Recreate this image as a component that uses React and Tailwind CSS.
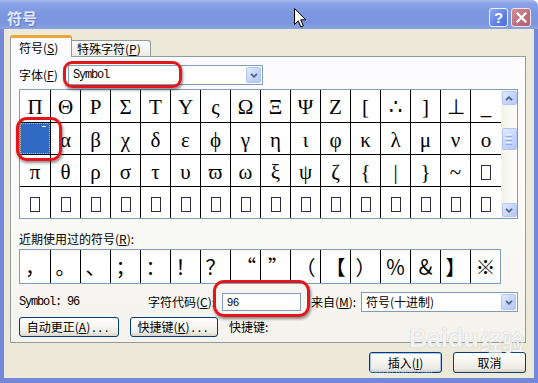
import React from 'react';

const R1 = ['Π','Θ','Ρ','Σ','Τ','Υ','ς','Ω','Ξ','Ψ','Ζ','[','∴',']','⊥','_'];
const R2 = ['SEL','α','β','χ','δ','ε','ϕ','γ','η','ι','φ','κ','λ','μ','ν','ο'];
const R3 = ['π','θ','ρ','σ','τ','υ','ϖ','ω','ξ','ψ','ζ','{','|','}','~','BOX'];
const R4 = Array(16).fill('BOX');
const ROWS = [R1, R2, R3, R4];
const RECENT = ['，','。','、','；','：','！','？','“','”','（','【','）','％','＆','】','※'];

function Chevron({ up }) {
  return (
    <svg width="8" height="5" viewBox="0 0 8 5">
      <path d={up ? 'M1 4.2L4 1.2L7 4.2' : 'M1 0.8L4 3.8L7 0.8'} fill="none" stroke="#4d6185" strokeWidth="1.7" />
    </svg>
  );
}

function BlueBtn({ className, children }) {
  return (
    <div className={'flex items-center justify-center rounded-[2px] border border-[#b2c6f4] bg-[linear-gradient(135deg,#e2eafe_0%,#c6d6fc_50%,#b4c9f8_100%)] ' + className}>
      {children}
    </div>
  );
}

function Combo({ className, children, textClass }) {
  return (
    <div className={'h-[20px] flex border border-[#7f9db9] bg-white ' + className}>
      <div className={'flex-1 flex items-center pl-[4px] ' + textClass}>{children}</div>
      <BlueBtn className="w-[15px] m-[1px]">
        <Chevron />
      </BlueBtn>
    </div>
  );
}

function XPButton({ className, children, isDefault }) {
  return (
    <div
      className={
        'h-full flex items-center justify-center rounded-[3px] border border-[#003c74] bg-[linear-gradient(to_bottom,#ffffff_0%,#f6f5f0_45%,#ecebe5_80%,#d8d2c6_100%)] ' +
        (isDefault ? 'shadow-[inset_0_0_0_1px_#a9c2f0] ' : '') +
        className
      }
    >
      {children}
    </div>
  );
}

function SymCell({ ch, ri, ci }) {
  const edge = (ci < 15 ? 'border-r ' : '') + (ri > 0 ? 'border-t ' : '');
  if (ch === 'SEL') {
    return (
      <div className={edge + 'border-black bg-[#316ac5]'}>
        <div className="w-full h-full border border-dotted border-[#e7c46c] flex justify-end pt-[2px] pr-[3px]">
          <div className="w-[4px] h-[1px] bg-white" />
        </div>
      </div>
    );
  }
  return (
    <div className={edge + 'border-black flex justify-center pt-[7px]'}>
      {ch === 'BOX' ? (
        <div className="mt-[3px] w-[10px] h-[15px] border border-[#2c2c4c]" />
      ) : (
        <span className="text-[21px] leading-[21px] font-['Liberation_Serif',serif]">{ch}</span>
      )}
    </div>
  );
}

const MONO = "font-['Liberation_Mono',monospace] text-[12px] tracking-[-1.2px]";

function recentAlign(i) {
  if (i === 7) return 'justify-end pr-[4px]';
  if (i === 8) return 'justify-start pl-[7px]';
  return 'justify-center';
}

export default function App() {
  return (
    <div className="w-[538px] h-[383px] overflow-hidden relative bg-white font-['Noto_Sans_CJK_SC',sans-serif] text-[12px] text-black">
      <div className="w-full h-full flex flex-col">
        {/* Title bar */}
        <div className="h-[29px] shrink-0 flex items-center pl-[7px] pr-[7px] pt-[5px] rounded-tr-[6px] bg-[linear-gradient(to_bottom,#a9bcef_0%,#8aa3e6_12%,#7c97e0_45%,#7a95df_80%,#8ba3e5_100%)]">
          <span className="text-[15px] font-bold leading-none text-[#e3e9f8] [text-shadow:1px_1px_0_#6479c9]">符号</span>
          <div className="ml-auto flex gap-[3px]">
            <div className="w-[19px] h-[19px] rounded-[3px] border border-[#eef2fc] bg-[linear-gradient(135deg,#8eaaf2_0%,#5c7fe4_60%,#5173dc_100%)] flex items-center justify-center">
              <span className="text-white font-bold text-[15px] leading-none font-['Liberation_Sans',sans-serif]">?</span>
            </div>
            <div className="w-[20px] h-[19px] rounded-[3px] border border-[#f0e4ea] bg-[linear-gradient(135deg,#d38e98_0%,#bb6d7b_60%,#b06473_100%)] flex items-center justify-center">
              <svg width="11" height="11" viewBox="0 0 11 11">
                <path d="M1.5 1.5L9.5 9.5M9.5 1.5L1.5 9.5" stroke="#fff" strokeWidth="2.2" strokeLinecap="square" />
              </svg>
            </div>
          </div>
        </div>

        {/* Body */}
        <div className="flex-1 flex flex-col border-l-[4px] border-r-[4px] border-b-[5px] border-[#7488d9] bg-[#ece9d8] pl-[6px] pr-[8px] pt-[6px]">
          {/* Tabs */}
          <div className="h-[21px] flex items-end">
            <div className="relative z-10 w-[62px] h-[22px] -mb-[1px] bg-[#fcfcfe] border-x border-[#919b9c] border-t-[3px] border-t-[#f0a33a] rounded-t-[3px] flex items-center pl-[8px]">
              符号(<span className="underline">S</span>)
            </div>
            <div className="w-[79px] h-[16px] border-t border-r border-[#919b9c] rounded-tr-[3px] bg-[linear-gradient(to_bottom,#ffffff,#ecebe6)] flex items-center pl-[5px]">
              特殊字符(<span className="underline">P</span>)
            </div>
          </div>

          {/* Panel */}
          <div className="h-[287px] border border-[#919b9c] bg-[linear-gradient(to_bottom,#fcfcfe_0%,#f9f9f6_60%,#f4f3ee_100%)] pl-[8px] pt-[8px] flex flex-col">
            <div className="h-[20px] flex items-center">
              <div className="w-[49px]">字体(<span className="underline">F</span>)</div>
              <Combo className="w-[195px]" textClass={MONO}>Symbol</Combo>
            </div>

            {/* Symbol grid */}
            <div className="mt-[4px] w-[499px] h-[130px] border border-[#7f9db9] flex bg-white">
              <div className="grid grid-cols-[31px_repeat(15,30px)] grid-rows-[32px_32px_32px_32px]">
                {ROWS.map((r, ri) => r.map((ch, ci) => <SymCell key={ri + '-' + ci} ch={ch} ri={ri} ci={ci} />))}
              </div>
              <div className="w-[16px] flex flex-col items-center py-[1px] bg-[linear-gradient(to_right,#f3f2ec,#fdfdfb)]">
                <BlueBtn className="w-[15px] h-[14px]">
                  <Chevron up />
                </BlueBtn>
                <BlueBtn className="mt-[23px] w-[15px] h-[22px] flex-col gap-[1px]">
                  <div className="w-[6px] h-[1px] bg-[#eef3fe]" />
                  <div className="w-[6px] h-[1px] bg-[#8eaaf0]" />
                  <div className="w-[6px] h-[1px] bg-[#eef3fe]" />
                  <div className="w-[6px] h-[1px] bg-[#8eaaf0]" />
                  <div className="w-[6px] h-[1px] bg-[#eef3fe]" />
                  <div className="w-[6px] h-[1px] bg-[#8eaaf0]" />
                </BlueBtn>
                <div className="flex-1" />
                <BlueBtn className="w-[15px] h-[14px]">
                  <Chevron />
                </BlueBtn>
              </div>
            </div>

            <div className="mt-[13px] h-[14px] leading-[14px]">
              近期使用过的符号(<span className="underline">R</span>):
            </div>

            {/* Recent */}
            <div className="mt-[3px] w-[482px] h-[35px] border border-[#7f9db9] bg-white grid grid-cols-[31px_repeat(14,30px)_29px]">
              {RECENT.map((ch, i) => (
                <div
                  key={i}
                  className={(i < 15 ? 'border-r border-black ' : '') + 'flex text-[20px] leading-[33px] ' + recentAlign(i)}
                >
                  {ch}
                </div>
              ))}
            </div>

            {/* Info row */}
            <div className="mt-[8px] h-[20px] flex items-center">
              <div className={'w-[129px] ' + MONO}>Symbol: 96</div>
              <div className="w-[74px]">字符代码(<span className="underline">C</span>):</div>
              <div className="w-[79px] h-[18px] border border-[#7f9db9] bg-white flex items-center pl-[4px] font-['Liberation_Sans',sans-serif] text-[11px]">
                96
              </div>
              <div className="ml-[10px] w-[50px]">来自(<span className="underline">M</span>):</div>
              <Combo className="w-[157px]" textClass="">符号(十进制)</Combo>
            </div>

            {/* Buttons row */}
            <div className="mt-[5px] h-[20px] flex items-center">
              <XPButton className="w-[100px]">
                自动更正(<span className="underline">A</span>)<span className="tracking-[3px] pl-[2px]">...</span>
              </XPButton>
              <XPButton className="ml-[11px] w-[88px]">
                快捷键(<span className="underline">K</span>)<span className="tracking-[3px] pl-[2px]">...</span>
              </XPButton>
              <div className="ml-[11px]">快捷键:</div>
            </div>
          </div>

          {/* Dialog buttons */}
          <div className="mt-[9px] h-[21px] flex justify-end gap-[11px]">
            <XPButton className="w-[73px]" isDefault>
              插入(<span className="underline">I</span>)
            </XPButton>
            <XPButton className="w-[73px]">取消</XPButton>
          </div>
        </div>
      </div>

      {/* Red annotation marks */}
      <div className="absolute left-[63px] top-[61px] w-[119px] h-[27px] border-[3px] border-[#e3161c] rounded-[9px] shadow-[1px_2px_3px_rgba(0,0,0,0.45)]" />
      <div className="absolute left-[16px] top-[117px] w-[46px] h-[44px] border-[3px] border-[#e3161c] rounded-[11px] shadow-[1px_2px_3px_rgba(0,0,0,0.45)]" />
      <div className="absolute left-[213px] top-[280px] w-[97px] h-[37px] border-[3px] border-[#e3161c] rounded-[11px] shadow-[1px_2px_3px_rgba(0,0,0,0.45)]" />

      {/* Watermark */}
      <div className="absolute left-[409px] top-[326px] flex items-end text-[25px] font-bold leading-none text-white/85 [text-shadow:0_0_1px_#a8a8a8] font-['Liberation_Sans',sans-serif]">
        <span>Bai</span>
        <span>du</span>
        <span className="text-[22px] font-['Noto_Sans_CJK_SC',sans-serif] ml-[2px]">经验</span>
      </div>
      <div className="absolute left-[368px] top-[369px] text-[8px] leading-none text-white/50 font-['Liberation_Sans',sans-serif]">
        jingyan.baidu.com
      </div>

      {/* Mouse cursor */}
      <svg className="absolute left-[294px] top-[8px]" width="13" height="21" viewBox="0 0 13 21">
        <path d="M0.5 0.5L0.5 16.5L4.3 12.8L6.8 19L9.3 18L6.8 11.8L11.8 11.8Z" fill="#fff" stroke="#000" strokeWidth="1" strokeLinejoin="miter" />
      </svg>
    </div>
  );
}
